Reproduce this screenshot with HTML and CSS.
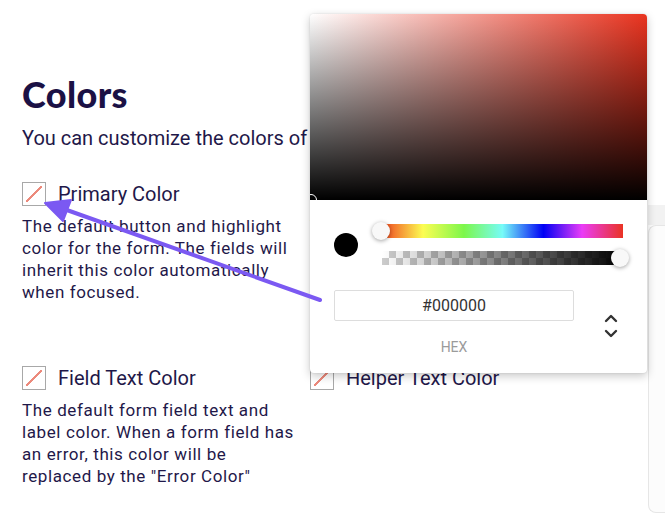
FILE: index.html
```html
<!DOCTYPE html>
<html>
<head>
<meta charset="utf-8">
<link rel="stylesheet" href="styles.css">
</head>
<body>
<div class="page">
  <div class="main">
    <div class="header"></div>
    <div class="content">
      <h1 class="title">Colors</h1>
      <p class="intro">You can customize the colors of your form to match your brand.</p>
      <div class="grid">
        <div class="item">
          <div class="item-head"><span class="swatch"></span><span class="label">Primary Color</span></div>
          <p class="desc">The default button and highlight color for the form. The fields will inherit this color automatically when focused.</p>
        </div>
        <div class="item">
          <div class="item-head"><span class="swatch"></span><span class="label">Background Color</span></div>
          <p class="desc">The background color of the form.</p>
        </div>
        <div class="item">
          <div class="item-head"><span class="swatch"></span><span class="label">Field Text Color</span></div>
          <p class="desc">The default form field text and label color. When a form field has an error, this color will be replaced by the "Error Color"</p>
        </div>
        <div class="item">
          <div class="item-head"><span class="swatch"></span><span class="label">Helper Text Color</span></div>
        </div>
      </div>
    </div>
  </div>
  <div class="side">
    <div class="band"></div>
    <div class="card"></div>
  </div>
</div>

<div class="picker">
  <div class="sat">
    <span class="sat-cursor"></span>
  </div>
  <div class="picker-body">
    <div class="row-sliders">
      <span class="preview"></span>
      <div class="sliders">
        <div class="hue"><span class="thumb thumb-left"></span></div>
        <div class="alpha"><div class="alpha-grad"></div><span class="thumb thumb-right"></span></div>
      </div>
    </div>
    <div class="row-input">
      <div class="field">
        <div class="hex-input">#000000</div>
        <div class="hex-label">HEX</div>
      </div>
      <svg class="toggle" width="14" height="28" viewBox="0 0 14 28">
        <polyline points="2,9 7,4 12,9" fill="none" stroke="#333" stroke-width="2.4" stroke-linecap="round" stroke-linejoin="round"/>
        <polyline points="2,19 7,24 12,19" fill="none" stroke="#333" stroke-width="2.4" stroke-linecap="round" stroke-linejoin="round"/>
      </svg>
    </div>
  </div>
</div>

<svg class="arrow" width="665" height="517" viewBox="0 0 665 517">
  <line x1="320" y1="300" x2="64" y2="209" stroke="#7b59f2" stroke-width="4" stroke-linecap="round"/>
  <polygon points="45,203 71,200 63,221" fill="#7b59f2" stroke="#7b59f2" stroke-width="2" stroke-linejoin="round"/>
</svg>
</body>
</html>
```

FILE: styles.css
```css
html, body {
  margin: 0;
  padding: 0;
  background: #ffffff;
}
body {
  width: 665px;
  height: 517px;
  overflow: hidden;
  position: relative;
  font-family: Roboto, "Liberation Sans", sans-serif;
  color: #1f1849;
}
.page {
  display: flex;
  height: 517px;
}
.main {
  width: 648px;
  flex: none;
}
.header {
  height: 57px;
}
.content {
  padding: 16px 0 0 22px;
}
.title {
  margin: 0;
  font-family: Lato, "Liberation Sans", sans-serif;
  font-weight: 900;
  font-size: 36px;
  line-height: 43px;
  color: #1b1145;
  letter-spacing: 0.4px;
}
.intro {
  margin: 10px 0 0 0;
  font-size: 20px;
  line-height: 24px;
  white-space: nowrap;
  overflow: hidden;
  letter-spacing: 0;
}
.grid {
  margin-top: 32px;
  display: grid;
  grid-template-columns: 276px 276px;
  column-gap: 12px;
  row-gap: 63px;
}
.item-head {
  display: flex;
  align-items: center;
  height: 24px;
}
.swatch {
  width: 22px;
  height: 22px;
  border: 1px solid #a8a8a8;
  flex: none;
  background: linear-gradient(to bottom right, transparent calc(50% - 0.8px), #ec8a7c calc(50% - 0.8px), #ec8a7c calc(50% + 0.8px), transparent calc(50% + 0.8px));
  background-size: 16px 16px;
  background-position: 3px 3px;
  background-repeat: no-repeat;
}
.label {
  margin-left: 12px;
  font-size: 20px;
  line-height: 24px;
}
.desc {
  margin: 9px 0 0 0;
  font-size: 17px;
  line-height: 22px;
  letter-spacing: 0.6px;
}
.side {
  flex: 1;
  padding-top: 205px;
}
.band {
  height: 20px;
  background: #f2f2f2;
}
.card {
  height: 286px;
  border: 1px solid #e6e6e6;
  border-right: none;
  border-radius: 8px 0 0 8px;
  background: #fcfcfc;
}

/* picker */
.picker {
  position: absolute;
  left: 310px;
  top: 14px;
  width: 337px;
  height: 359px;
  background: #ffffff;
  border-radius: 4px;
  box-shadow: 0 3px 10px rgba(0, 0, 0, 0.22), 0 0 2px rgba(0, 0, 0, 0.12);
  overflow: hidden;
}
.sat {
  position: relative;
  height: 186px;
  background:
    linear-gradient(to top, #000000, rgba(0, 0, 0, 0)),
    linear-gradient(to right, #ffffff, #e9331f);
}
.sat-cursor {
  position: absolute;
  left: -5px;
  bottom: -6px;
  width: 10px;
  height: 10px;
  border: 1.5px solid #ffffff;
  border-radius: 50%;
}
.picker-body {
  padding: 24px 24px 0 24px;
}
.row-sliders {
  display: flex;
  align-items: center;
}
.preview {
  width: 24px;
  height: 24px;
  border-radius: 50%;
  background: #000000;
  flex: none;
}
.sliders {
  flex: 1;
  margin-left: 24px;
  display: flex;
  flex-direction: column;
  gap: 13px;
}
.hue, .alpha {
  position: relative;
  height: 14px;
}
.hue {
  background: linear-gradient(to right, #f0421f 0%, #fcfd52 17%, #7cf74b 34%, #76fbf8 50%, #0000f5 67%, #ea3cf7 83%, #ea3323 100%);
}
.alpha {
  background-color: #ffffff;
  background-image:
    linear-gradient(45deg, #cccccc 25%, transparent 25%, transparent 75%, #cccccc 75%),
    linear-gradient(45deg, #cccccc 25%, transparent 25%, transparent 75%, #cccccc 75%);
  background-size: 14px 14px;
  background-position: 0 0, 7px 7px;
}
.alpha-grad {
  height: 100%;
  background: linear-gradient(to right, rgba(0, 0, 0, 0), #000000);
}
.thumb {
  position: absolute;
  top: -2px;
  width: 18px;
  height: 18px;
  border-radius: 50%;
  background: #f8f8f8;
  box-shadow: 0 1px 4px rgba(0, 0, 0, 0.37);
}
.thumb-left {
  left: -10px;
}
.thumb-right {
  right: -6px;
}
.row-input {
  display: flex;
  margin-top: 25px;
}
.field {
  width: 240px;
}
.hex-input {
  height: 29px;
  border: 1px solid #dddddd;
  border-radius: 2px;
  font-size: 16px;
  line-height: 29px;
  text-align: center;
  color: #333333;
}
.hex-label {
  margin-top: 18px;
  font-size: 14px;
  line-height: 16px;
  text-align: center;
  color: #9b9b9b;
}
.toggle {
  margin-left: 30px;
  margin-top: 22px;
}
.arrow {
  position: absolute;
  left: 0;
  top: 0;
  pointer-events: none;
}
```
